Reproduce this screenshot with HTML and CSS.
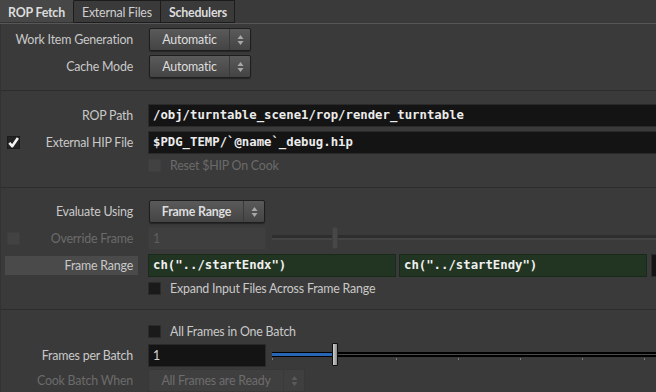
FILE: index.html
```html
<!DOCTYPE html>
<html lang="en">
<head>
    <meta charset="UTF-8">
    <title>ROP Fetch</title>
    <link rel="stylesheet" href="styles.css">
</head>
<body>
    <div class="tabs">
        <div class="tab active">ROP Fetch</div>
        <div class="tab">External Files</div>
        <div class="tab bold">Schedulers</div>
    </div>

    <div class="panel">
        <div class="group g1">
            <div class="row">
                <div class="lbl">Work Item Generation</div>
                <div class="ctl">
                    <div class="menu menu-auto">
                        <span class="menu-text">Automatic</span>
                        <span class="menu-arrows"><svg width="7" height="12" viewBox="0 0 7 12"><path d="M3.5 1 L6.5 5 L0.5 5 Z M3.5 11 L6.5 7 L0.5 7 Z" fill="#a8a8a8"/></svg></span>
                    </div>
                </div>
            </div>
            <div class="row">
                <div class="lbl">Cache Mode</div>
                <div class="ctl">
                    <div class="menu menu-auto">
                        <span class="menu-text">Automatic</span>
                        <span class="menu-arrows"><svg width="7" height="12" viewBox="0 0 7 12"><path d="M3.5 1 L6.5 5 L0.5 5 Z M3.5 11 L6.5 7 L0.5 7 Z" fill="#a8a8a8"/></svg></span>
                    </div>
                </div>
            </div>
        </div>

        <div class="group g2">
            <div class="row">
                <div class="lbl">ROP Path</div>
                <div class="ctl">
                    <div class="field mono wide">/obj/turntable_scene1/rop/render_turntable</div>
                </div>
            </div>
            <div class="row">
                <div class="lbl has-check">
                    <span class="check checked"><svg width="11" height="11" viewBox="0 0 11 11"><path d="M1.3 5.8 L4.2 9.2 L9.9 1" fill="none" stroke="#f4f4f4" stroke-width="2.6" stroke-linejoin="round"/></svg></span>
                    <span>External HIP File</span>
                </div>
                <div class="ctl">
                    <div class="field mono wide">$PDG_TEMP/`@name`_debug.hip</div>
                </div>
            </div>
            <div class="row short">
                <div class="lbl"></div>
                <div class="ctl">
                    <span class="check disabled"></span>
                    <span class="check-text dim">Reset $HIP On Cook</span>
                </div>
            </div>
        </div>

        <div class="group g3">
            <div class="row">
                <div class="lbl">Evaluate Using</div>
                <div class="ctl">
                    <div class="menu menu-eval">
                        <span class="menu-text bold">Frame Range</span>
                        <span class="menu-arrows"><svg width="7" height="12" viewBox="0 0 7 12"><path d="M3.5 1 L6.5 5 L0.5 5 Z M3.5 11 L6.5 7 L0.5 7 Z" fill="#a8a8a8"/></svg></span>
                    </div>
                </div>
            </div>
            <div class="row">
                <div class="lbl has-check dim">
                    <span class="check disabled"></span>
                    <span>Override Frame</span>
                </div>
                <div class="ctl">
                    <div class="field num disabled-field">1</div>
                    <div class="slider">
                        <div class="track track-dim"></div>
                        <div class="thumb thumb-dim"></div>
                    </div>
                </div>
            </div>
            <div class="row">
                <div class="lbl highlight">Frame Range</div>
                <div class="ctl tight">
                    <div class="field mono green">ch("../startEndx")</div>
                    <div class="field mono green">ch("../startEndy")</div>
                    <div class="field mono stub">1</div>
                </div>
            </div>
            <div class="row short">
                <div class="lbl"></div>
                <div class="ctl">
                    <span class="check"></span>
                    <span class="check-text">Expand Input Files Across Frame Range</span>
                </div>
            </div>
        </div>

        <div class="group g4">
            <div class="row short">
                <div class="lbl"></div>
                <div class="ctl">
                    <span class="check"></span>
                    <span class="check-text">All Frames in One Batch</span>
                </div>
            </div>
            <div class="row batch">
                <div class="lbl">Frames per Batch</div>
                <div class="ctl">
                    <div class="field num">1</div>
                    <div class="slider">
                        <div class="track"><div class="fill"></div></div>
                        <div class="ticks"></div>
                        <div class="thumb"></div>
                    </div>
                </div>
            </div>
            <div class="row cook">
                <div class="lbl dim">Cook Batch When</div>
                <div class="ctl">
                    <div class="menu menu-cook">
                        <span class="menu-text">All Frames are Ready</span>
                        <span class="menu-arrows"><svg width="7" height="12" viewBox="0 0 7 12"><path d="M3.5 1 L6.5 5 L0.5 5 Z M3.5 11 L6.5 7 L0.5 7 Z" fill="#5a5a5a"/></svg></span>
                    </div>
                </div>
            </div>
        </div>
    </div>
</body>
</html>
```

FILE: styles.css
```css
* {
    margin: 0;
    padding: 0;
    box-sizing: border-box;
}

body {
    width: 656px;
    height: 392px;
    overflow: hidden;
    background: #3a3a3a;
    font-family: Lato, "Liberation Sans", sans-serif;
    font-size: 12.4px;
    letter-spacing: -0.2px;
    color: #c9c9c9;
}

.bold {
    font-weight: bold;
}

.dim {
    color: #6b6b6b;
}

/* tab strip */
.tabs {
    display: flex;
    height: 24px;
    border-bottom: 1px solid #575757;
}

.tab {
    height: 23px;
    padding: 2px 8px 0;
    line-height: 19px;
    border: 1px solid #1c1c1c;
    border-left: none;
    color: #cfcfcf;
    white-space: nowrap;
}

.tab.active {
    background: #474747;
    border-top-color: #474747;
    border-bottom-color: #333;
    font-weight: bold;
    color: #dcdcdc;
}

.tab.bold {
    font-weight: bold;
    color: #dcdcdc;
    padding-right: 7px;
}

/* parameter groups */
.panel {
    border-left: 1px solid #333;
}

.group {
    display: flex;
    flex-direction: column;
    gap: 4px;
    border-bottom: 1px solid #2d2d2d;
}

.g1 { padding: 4px 0 12px; }
.g2 { padding: 13px 0 15px; }
.g3 { padding: 12px 0 14px; }
.g4 { padding: 14px 0 0; border-bottom: none; }

.row {
    display: flex;
    align-items: center;
    height: 23px;
}

.row.short {
    height: 14px;
}

.row.batch {
    margin-top: 2px;
}

.row.cook {
    margin-top: -2px;
}

.lbl {
    width: 133px;
    height: 100%;
    margin-left: 4px;
    padding-right: 5px;
    display: flex;
    align-items: center;
    justify-content: flex-end;
    white-space: nowrap;
}

.lbl.has-check {
    justify-content: space-between;
}

.lbl.highlight {
    height: 19px;
    background: #4a4a4a;
}

.ctl {
    flex: 1;
    margin-left: 10px;
    display: flex;
    align-items: center;
    height: 100%;
    min-width: 0;
}

.ctl.tight {
    gap: 3px;
}

/* checkboxes */
.check {
    width: 13px;
    height: 13px;
    flex: none;
    background: #1a1a1a;
    border: 1px solid #2b2b2b;
    display: flex;
    align-items: center;
    justify-content: center;
}

.lbl .check {
    margin-left: 2px;
}

.check.checked {
    background: #232323;
    border-color: #1b1b1b;
}

.check.disabled {
    background: #424242;
    border-color: #3e3e3e;
}

.check-text {
    margin-left: 9px;
    white-space: nowrap;
}

/* drop-down menus */
.menu {
    display: flex;
    height: 23px;
    margin-left: 1px;
    border: 1px solid #1e1e1e;
    border-radius: 2px;
    background: linear-gradient(#5a5a5a, #444);
    box-shadow: 0 1px 1px rgba(0, 0, 0, 0.35);
    color: #dedede;
}

.menu-auto { width: 102px; }
.menu-eval { width: 116px; }

.menu-cook {
    width: 157px;
    margin-left: 0;
    background: #3f3f3f;
    border-color: #383838;
    box-shadow: none;
    color: #6d6d6d;
}

.menu-text {
    flex: 1;
    text-align: center;
    line-height: 21px;
    white-space: nowrap;
}

.menu-arrows {
    width: 21px;
    border-left: 1px solid #3a3a3a;
    display: flex;
    align-items: center;
    justify-content: center;
}

/* text fields */
.field {
    height: 23px;
    padding-left: 4px;
    line-height: 21px;
    background: #141414;
    border: 1px solid #2a2a2a;
    color: #ececec;
    white-space: nowrap;
    overflow: hidden;
}

.mono {
    font-family: "DejaVu Sans Mono", "Liberation Mono", monospace;
    font-weight: bold;
    font-size: 12.3px;
    letter-spacing: 0;
}

.field.wide {
    flex: 1;
    margin-right: -4px;
}

.field.num {
    width: 118px;
    flex: none;
    color: #d4d4d4;
}

.field.disabled-field {
    background: #3f3f3f;
    border-color: #3c3c3c;
    color: #5e5e5e;
}

.field.green {
    width: 248px;
    flex: none;
    background: #223522;
    border-color: #1a2a1a;
    color: #f0f0f0;
}

.field.stub {
    width: 30px;
    flex: none;
    margin-left: 1px;
}

/* sliders */
.slider {
    flex: 1;
    height: 23px;
    margin-left: 6px;
    margin-right: -4px;
    position: relative;
    padding-top: 8px;
}

.track {
    height: 5px;
    background: linear-gradient(#000 0 2px, #4a4a4a 2px 3px, #000 3px);
}

.track-dim {
    background: linear-gradient(#2e2e2e 0 3px, #444 3px);
}

.fill {
    width: 60px;
    height: 5px;
    background: linear-gradient(#000 0 1px, #2766b4 1px 4px, #000 4px);
}

.ticks {
    height: 2px;
    margin-top: 1px;
    background: repeating-linear-gradient(to right, #7a7a7a 0 1px, transparent 1px 62px);
}

.thumb {
    position: absolute;
    left: 60px;
    top: -1px;
    width: 6px;
    height: 23px;
    background: linear-gradient(to right, #cfcfcf, #8c8c8c);
    border: 1px solid #111;
    border-radius: 1px;
}

.thumb-dim {
    top: 0;
    height: 22px;
    background: #474747;
    border-color: #3e3e3e;
}
```
